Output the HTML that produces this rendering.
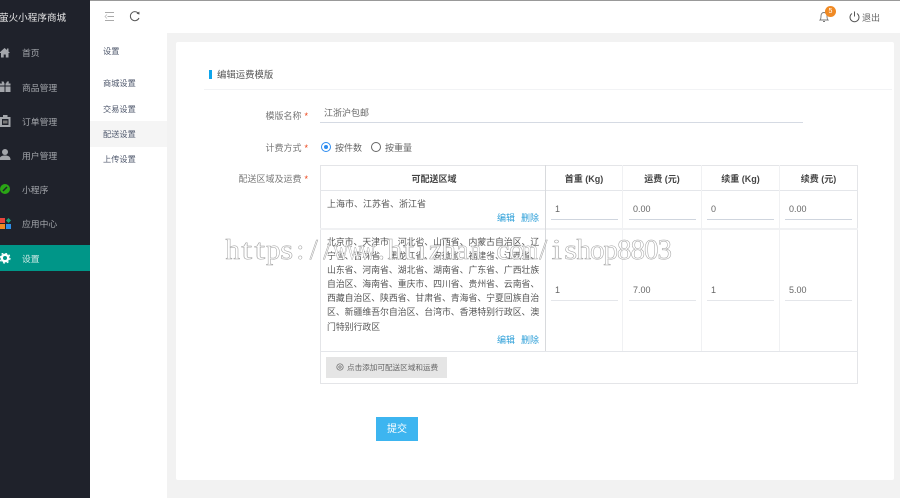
<!DOCTYPE html>
<html><head><meta charset="utf-8"><style>
*{margin:0;padding:0;box-sizing:border-box}
html,body{width:900px;height:498px;overflow:hidden;background:#f2f2f2;font-family:"Liberation Sans","Noto Sans CJK SC",sans-serif;color:#515a6e}
body{filter:blur(.25px)}
.a{position:absolute;white-space:nowrap}
.nav{position:absolute;left:22px;font-size:8.8px;color:#a3a6ab;line-height:14px;white-space:nowrap}
.ic{position:absolute;left:0;width:11px;height:11px}
.sub{position:absolute;left:103px;font-size:8.2px;color:#515a6e;line-height:14px;white-space:nowrap}
.lab{position:absolute;right:592px;font-size:9px;color:#777;line-height:14px;white-space:nowrap}
.lab b{color:#ed4014;font-weight:400;margin-left:3px}
.ln{position:absolute;background:#e4e6ea}
.th{position:absolute;top:166px;height:25px;line-height:26px;text-align:center;font-size:9px;font-weight:700;color:#444}
.inp{position:absolute;height:14px;font-size:9px;line-height:14px;color:#666;padding-left:3px}
.inp::after{content:"";position:absolute;left:-1px;width:67px;top:17px;height:1px;background:#cfd5de}
.r2::after{background:#e4e6ea}
.act{position:absolute;font-size:9px;color:#2d9fd8;line-height:12px;white-space:nowrap}
.wm{position:absolute;left:226px;top:235px;display:flex;font-family:"Liberation Serif",serif;font-size:29px;line-height:30px;color:#fff;-webkit-text-stroke:.5px #a0a0a0;white-space:nowrap}
.wm span{display:flex;justify-content:center;width:13.5px;flex:none}
.wm .t{transform:scaleX(1.35)}
.wm .s{transform:scaleX(1.15)}
.wm .w{transform:scaleX(.72)}
.wm .i{transform:scaleX(1.3)}
</style></head><body>
<div class="a" style="left:0;top:0;width:90px;height:498px;background:#1f222b"></div>
<div class="a" style="left:-1px;top:12px;font-size:9.6px;color:#e6e6e6;line-height:14px;width:91px;overflow:hidden">萤火小程序商城</div>
<svg class="ic" style="top:47px" viewBox="0 0 11 11"><path d="M-1 6L4.500 1 7 3V1.500H8.500V4.500L10 6 8.500 6V10.500H5.800V7.500H3.700V10.500H1V6z" fill="#a3a6ab"/></svg>
<div class="nav" style="top:46px">首页</div>
<svg class="ic" style="top:81px" viewBox="0 0 11 11"><path d="M0 2.500h4.500v2H0zM5.500 2.500H10.500v2H5.500zM0 5.500h4.500V11H0zM5.500 5.500h5V11h-5zM2 2.500L1.500 .5h2l1 2zM8.500 2.500L9 .5H7l-1 2z" fill="#a3a6ab"/></svg>
<div class="nav" style="top:81px">商品管理</div>
<svg class="ic" style="top:115px;height:12px" viewBox="0 0 11 12"><path d="M0 2h3V0h4.500v2h3v10H0zM2 4v6h6.500V4z" fill="#a3a6ab"/><rect x="3" y="5.500" width="4.500" height="3" fill="#777"/></svg>
<div class="nav" style="top:115px">订单管理</div>
<svg class="ic" style="top:149px" viewBox="0 0 11 11"><circle cx="5" cy="3" r="3" fill="#a3a6ab"/><path d="M-.5 11c0-3.500 2-4.500 5.500-4.500s5.500 1 5.500 4.500z" fill="#a3a6ab"/></svg>
<div class="nav" style="top:149px">用户管理</div>
<svg class="ic" style="top:184px" viewBox="0 0 11 11"><circle cx="5" cy="5" r="5" fill="#2aa515"/><path d="M3 7l4-4" stroke="#1f222b" stroke-width="1.500"/></svg>
<div class="nav" style="top:183px">小程序</div>
<svg class="ic" style="top:218px;width:12px;height:12px" viewBox="0 0 12 12"><rect x="0" y="0" width="5" height="5" fill="#e8453c"/><rect x="0" y="6" width="5" height="5" fill="#f08a24"/><rect x="6" y="6" width="5" height="5" fill="#2f8fe8"/><path d="M8.500 0L11 2.500 8.500 5 6 2.500z" fill="#1aa179"/></svg>
<div class="nav" style="top:217px">应用中心</div>
<div class="a" style="left:0;top:245px;width:90px;height:26px;background:#009688"></div>
<svg class="ic" style="top:253px" viewBox="0 0 11 11"><circle cx="5" cy="5" r="3.200" fill="none" stroke="#fff" stroke-width="2.400"/><circle cx="5" cy="5" r="5" fill="none" stroke="#fff" stroke-width="1.200" stroke-dasharray="2 1.930"/></svg>
<div class="nav" style="top:252px;color:#d5ece9">设置</div>

<div class="a" style="left:90px;top:0;width:810px;height:33px;background:#fff"></div>
<div class="a" style="left:90px;top:0;width:810px;height:1px;background:#999"></div>
<svg class="a" style="left:104px;top:11px" width="12" height="12" viewBox="0 0 12 12"><path d="M1 1.500h9M3.500 5.500h6.500M1 9.500h9" fill="none" stroke="#aaa" stroke-width="1.100"/><path d="M3 3.500L1 5.500l2 2" fill="none" stroke="#bbb" stroke-width=".8"/></svg>
<svg class="a" style="left:129px;top:10px" width="12" height="13" viewBox="0 0 12 13"><path d="M9.500 3.500A4.500 4.500 0 1 0 10 8" fill="none" stroke="#555" stroke-width="1"/><path d="M7.500 3.700L10.500 4.500 10.300 1.500z" fill="#555"/></svg>
<svg class="a" style="left:818px;top:10px" width="12" height="13" viewBox="0 0 12 13"><path d="M2 10c1-1 1-2 1-4 0-2 1-3.500 3-3.500S9 4 9 6c0 2 0 3 1 4zM5 11.500h2" fill="none" stroke="#777" stroke-width=".9"/></svg>
<div class="a" style="left:825px;top:6px;width:11px;height:11px;border-radius:50%;background:#f08a24;color:#fff;font-size:7px;line-height:11px;text-align:center">5</div>
<svg class="a" style="left:849px;top:11px" width="11" height="12" viewBox="0 0 11 12"><path d="M3 2.500a4.500 4.500 0 1 0 5 0M5.500 .5v5" fill="none" stroke="#555" stroke-width="1"/></svg>
<div class="a" style="left:862px;top:11px;font-size:9px;line-height:14px;color:#666">退出</div>

<div class="a" style="left:90px;top:33px;width:77px;height:465px;background:#fff"></div>
<div class="a" style="left:90px;top:121px;width:77px;height:26px;background:#f5f5f5"></div>
<div class="sub" style="top:45px">设置</div>
<div class="sub" style="top:77px">商城设置</div>
<div class="sub" style="top:103px">交易设置</div>
<div class="sub" style="top:128px">配送设置</div>
<div class="sub" style="top:153px">上传设置</div>

<div class="a" style="left:176px;top:42px;width:718px;height:438px;background:#fff;border-radius:2px"></div>
<div class="a" style="left:209px;top:70px;width:3px;height:9px;background:#0ea5ec"></div>
<div class="a" style="left:217px;top:68px;font-size:9.4px;line-height:14px;color:#555">编辑运费模版</div>
<div class="ln" style="left:204px;top:89px;width:688px;height:1px;background:#f2f3f5"></div>

<div class="lab" style="top:109px">模版名称<b>*</b></div>
<div class="a" style="left:324px;top:106px;font-size:9px;line-height:14px;color:#666">江浙沪包邮</div>
<div class="ln" style="left:320px;top:122px;width:483px;height:1px;background:#d5dae3"></div>

<div class="lab" style="top:141px">计费方式<b>*</b></div>
<div class="a" style="left:321px;top:142px;width:10px;height:10px;border:1px solid #2d8cf0;border-radius:50%"></div>
<div class="a" style="left:324px;top:145px;width:4px;height:4px;background:#2d8cf0;border-radius:50%"></div>
<div class="a" style="left:335px;top:141px;font-size:9px;line-height:14px;color:#666">按件数</div>
<div class="a" style="left:371px;top:142px;width:10px;height:10px;border:1.300px solid #666;border-radius:50%"></div>
<div class="a" style="left:385px;top:141px;font-size:9px;line-height:14px;color:#666">按重量</div>

<div class="lab" style="top:172px">配送区域及运费<b>*</b></div>

<div class="a" style="left:320px;top:165px;width:538px;height:219px;border:1px solid #e4e5e8"></div>
<div class="ln" style="left:320px;top:190px;width:538px;height:1px"></div>
<div class="ln" style="left:320px;top:228px;width:538px;height:2px;background:#f0f1f3"></div>
<div class="ln" style="left:320px;top:351px;width:538px;height:1px"></div>
<div class="ln" style="left:545px;top:165px;width:1px;height:186px;background:#d8dadd"></div>
<div class="ln" style="left:622px;top:165px;width:1px;height:186px;background:#f0f1f3"></div>
<div class="ln" style="left:701px;top:165px;width:1px;height:186px;background:#f0f1f3"></div>
<div class="ln" style="left:779px;top:165px;width:1px;height:186px;background:#f0f1f3"></div>

<div class="th" style="left:322px;width:224px">可配送区域</div>
<div class="th" style="left:546px;width:76px">首重 (Kg)</div>
<div class="th" style="left:623px;width:78px">运费 (元)</div>
<div class="th" style="left:702px;width:77px">续重 (Kg)</div>
<div class="th" style="left:780px;width:77px">续费 (元)</div>

<div class="a" style="left:327px;top:197px;font-size:9px;line-height:14px;color:#555">上海市、江苏省、浙江省</div>
<div class="act" style="left:497px;top:212px">编辑</div><div class="act" style="left:521px;top:212px">删除</div>
<div class="inp" style="left:552px;top:202px">1</div>
<div class="inp" style="left:630px;top:202px">0.00</div>
<div class="inp" style="left:708px;top:202px">0</div>
<div class="inp" style="left:786px;top:202px">0.00</div>

<div class="a" style="left:327px;top:235px;width:214px;font-size:8.85px;line-height:14.100px;color:#555;white-space:normal;letter-spacing:0">北京市、天津市、河北省、山西省、内蒙古自治区、辽<br>宁省、吉林省、黑龙江省、安徽省、福建省、江西省、<br>山东省、河南省、湖北省、湖南省、广东省、广西壮族<br>自治区、海南省、重庆市、四川省、贵州省、云南省、<br>西藏自治区、陕西省、甘肃省、青海省、宁夏回族自治<br>区、新疆维吾尔自治区、台湾市、香港特别行政区、澳<br>门特别行政区</div>
<div class="act" style="left:497px;top:334px">编辑</div><div class="act" style="left:521px;top:334px">删除</div>
<div class="inp r2" style="left:552px;top:283px">1</div>
<div class="inp r2" style="left:630px;top:283px">7.00</div>
<div class="inp r2" style="left:708px;top:283px">1</div>
<div class="inp r2" style="left:786px;top:283px">5.00</div>

<div class="a" style="left:326px;top:357px;width:121px;height:21px;background:#e5e5e5"></div>
<svg class="a" style="left:336px;top:363px" width="8" height="9" viewBox="0 0 8 9"><circle cx="4" cy="4" r="3.200" fill="none" stroke="#666" stroke-width=".7"/><circle cx="4" cy="4" r="1.200" fill="none" stroke="#666" stroke-width=".7"/></svg>
<div class="a" style="left:347px;top:361px;font-size:7.6px;line-height:13px;color:#666">点击添加可配送区域和运费</div>

<div class="a" style="left:376px;top:417px;width:42px;height:24px;background:#3db5f0;color:#fff;font-size:10px;line-height:25px;text-align:center">提交</div>

<div class="wm"><span>h</span><span class="t">t</span><span class="t">t</span><span>p</span><span class="s">s</span><span>:</span><span>/</span><span>/</span><span class="w">w</span><span class="w">w</span><span class="w">w</span><span>.</span><span>h</span><span class="t">t</span><span class="i">i</span><span>z</span><span>h</span><span>a</span><span class="w">n</span><span>.</span><span>c</span><span>o</span><span class="w">m</span><span>/</span><span class="i">i</span><span class="s">s</span><span>h</span><span>o</span><span>p</span><span>8</span><span>8</span><span>0</span><span>3</span></div>
</body></html>
